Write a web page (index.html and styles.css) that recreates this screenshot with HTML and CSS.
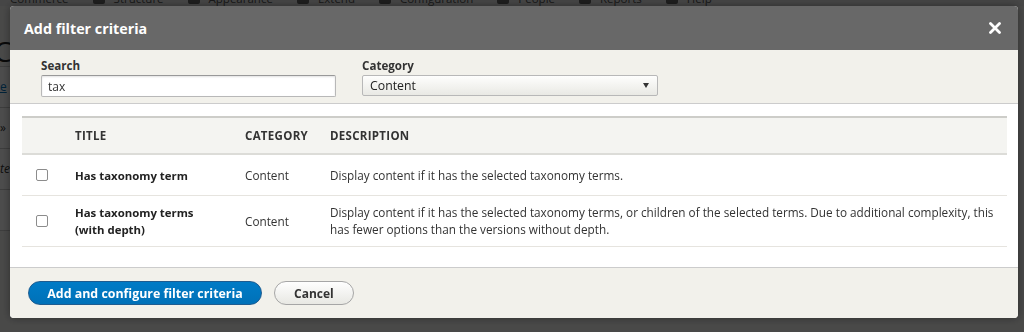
FILE: index.html
```html
<!DOCTYPE html>
<html lang="en">
<head>
    <meta charset="UTF-8">
    <meta name="viewport" content="width=device-width, initial-scale=1.0">
    <title>Add filter criteria</title>
    <link rel="stylesheet" href="styles.css">
</head>
<body>
    <nav class="toolbar">
        <a href="#" class="toolbar-first"><i class="toolbar-icon"></i>Commerce</a>
        <a href="#"><i class="toolbar-icon"></i>Structure</a>
        <a href="#"><i class="toolbar-icon"></i>Appearance</a>
        <a href="#"><i class="toolbar-icon"></i>Extend</a>
        <a href="#"><i class="toolbar-icon"></i>Configuration</a>
        <a href="#"><i class="toolbar-icon"></i>People</a>
        <a href="#"><i class="toolbar-icon"></i>Reports</a>
        <a href="#"><i class="toolbar-icon"></i>Help</a>
    </nav>

    <main class="page">
        <h1 class="page-title">C</h1>
        <div class="page-row"><a href="#">e</a></div>
        <div class="page-row">»</div>
        <div class="page-row page-row-italic">te</div>
        <div class="page-row"></div>
    </main>

    <div class="overlay"></div>

    <div class="dialog" role="dialog" aria-labelledby="dialogTitle">
        <div class="dialog-titlebar">
            <span id="dialogTitle" class="dialog-title">Add filter criteria</span>
            <button class="dialog-close" aria-label="Close">
                <svg width="12" height="12" viewBox="0 0 12 12">
                    <path d="M1.5 1.5 L10.5 10.5 M10.5 1.5 L1.5 10.5" stroke="#fff" stroke-width="2.8" stroke-linecap="round"/>
                </svg>
            </button>
        </div>

        <div class="filters">
            <div class="form-item">
                <label for="search">Search</label>
                <input id="search" class="form-text" type="text" value="tax">
            </div>
            <div class="form-item">
                <label for="category">Category</label>
                <div class="form-select" id="category">
                    <span>Content</span>
                    <span class="select-arrow"></span>
                </div>
            </div>
        </div>

        <div class="dialog-content">
            <table class="filter-table">
                <colgroup>
                    <col class="col-check">
                    <col class="col-title">
                    <col class="col-category">
                    <col>
                </colgroup>
                <thead>
                    <tr>
                        <th></th>
                        <th>Title</th>
                        <th>Category</th>
                        <th>Description</th>
                    </tr>
                </thead>
                <tbody>
                    <tr class="row-single">
                        <td><input type="checkbox" class="form-checkbox"></td>
                        <td class="item-title">Has taxonomy term</td>
                        <td>Content</td>
                        <td>Display content if it has the selected taxonomy terms.</td>
                    </tr>
                    <tr>
                        <td><input type="checkbox" class="form-checkbox"></td>
                        <td class="item-title">Has taxonomy terms<br>(with depth)</td>
                        <td>Content</td>
                        <td>Display content if it has the selected taxonomy terms, or children of the selected terms. Due to additional complexity, this has fewer options than the versions without depth.</td>
                    </tr>
                </tbody>
            </table>
        </div>

        <div class="button-pane">
            <button class="button button-primary">Add and configure filter criteria</button>
            <button class="button">Cancel</button>
        </div>
    </div>
</body>
</html>
```

FILE: styles.css
```css
body {
    font-family: "Open Sans", "DejaVu Sans", sans-serif;
    background-color: #f5f5f2;
    color: #333;
    margin: 0;
    overflow: hidden;
}
.toolbar {
    display: flex;
    gap: 24px;
    height: 14px;
    margin-top: -8px;
    padding-left: 10px;
    background-color: #ebebeb;
    font-size: 11.5px;
    line-height: 14px;
}
.toolbar a {
    display: flex;
    align-items: center;
    gap: 9px;
    color: #565656;
    text-decoration: none;
    white-space: nowrap;
}
.toolbar-icon {
    width: 12px;
    height: 10px;
    border-radius: 2px;
    background-color: #666;
}
.toolbar-first .toolbar-icon {
    display: none;
}
.page {
    width: 10px;
    overflow: hidden;
    padding-top: 26px;
}
.page-title {
    margin: 0 0 0 -6px;
    font-size: 28px;
    font-weight: normal;
    color: #222;
    height: 34px;
    border-bottom: 1px solid #ccc;
}
.page-row {
    height: 40px;
    line-height: 40px;
    font-size: 12px;
    border-bottom: 1px solid #ccc;
    background-color: #fff;
}
.page-row a {
    color: #0074bd;
}
.page-row-italic {
    font-style: italic;
}
.overlay {
    position: fixed;
    inset: 0;
    background-color: rgba(0, 0, 0, 0.7);
}
.dialog {
    position: fixed;
    top: 6px;
    left: 10px;
    width: 1008px;
    display: flex;
    flex-direction: column;
    background-color: #fff;
    border-radius: 4px;
    overflow: hidden;
    box-shadow: 0 0 8px rgba(0, 0, 0, 0.4);
}
.dialog-titlebar {
    display: flex;
    align-items: center;
    justify-content: space-between;
    height: 44px;
    padding: 0 16px 0 14px;
    background-color: #686868;
}
.dialog-title {
    color: #fff;
    font-size: 14.3px;
    font-weight: bold;
}
.dialog-close {
    border: 0;
    background: none;
    padding: 0;
    width: 14px;
    height: 14px;
    display: flex;
    align-items: center;
    justify-content: center;
}
.filters {
    display: flex;
    gap: 26px;
    height: 53px;
    padding-left: 31px;
    background-color: #f2f1eb;
    border-bottom: 1px solid #ccc;
}
.form-item {
    display: flex;
    flex-direction: column;
    padding-top: 8px;
}
.form-item label {
    font-size: 11.6px;
    font-weight: bold;
    color: #333;
    line-height: 16px;
    margin-bottom: 1px;
}
.form-text {
    box-sizing: border-box;
    width: 295px;
    height: 22px;
    margin: 0;
    padding: 0 6px;
    border: 1px solid #b8b8b8;
    border-top-color: #999;
    border-radius: 2px;
    box-shadow: inset 0 1px 2px rgba(0, 0, 0, 0.12);
    font-family: inherit;
    font-size: 12px;
    color: #333;
}
.form-select {
    box-sizing: border-box;
    width: 296px;
    height: 21px;
    display: flex;
    align-items: center;
    justify-content: space-between;
    padding: 0 8px 0 7px;
    border: 1px solid #b8b8b8;
    border-radius: 2px;
    background: linear-gradient(#fefefd, #e9e9e4);
    font-size: 12.3px;
    color: #222;
}
.select-arrow {
    width: 0;
    height: 0;
    border-left: 3.5px solid transparent;
    border-right: 3.5px solid transparent;
    border-top: 5px solid #333;
}
.dialog-content {
    height: 151px;
    padding: 12px 11px 0 12px;
    border-bottom: 1px solid #ccc;
}
.filter-table {
    width: 100%;
    border-collapse: collapse;
    table-layout: fixed;
    font-size: 11.75px;
    line-height: 17px;
    border-bottom: 1px solid #e6e4df;
}
.col-check {
    width: 41px;
}
.col-title {
    width: 170px;
}
.col-category {
    width: 85px;
}
.filter-table th {
    height: 35px;
    padding: 0 12px;
    text-align: left;
    text-transform: uppercase;
    font-size: 11.5px;
    letter-spacing: 0.3px;
    font-weight: bold;
    color: #333;
    background-color: #f4f4f1;
    border-top: 2px solid #cdcdc9;
    border-bottom: 2px solid #dcdcd8;
}
.filter-table td {
    padding: 8px 12px;
    border-bottom: 1px solid #e6e4df;
    vertical-align: middle;
}
.filter-table td:first-child {
    padding-left: 14px;
}
.row-single td {
    height: 24px;
}
.item-title {
    font-weight: bold;
    font-size: 11.4px;
    color: #222;
}
.form-checkbox {
    appearance: none;
    display: block;
    width: 12px;
    height: 12px;
    margin: 0;
    border: 1px solid #8c8c8c;
    border-radius: 2px;
    background-color: #fff;
}
.button-pane {
    display: flex;
    gap: 12px;
    padding: 13px 18px;
    background-color: #f2f1eb;
}
.button {
    height: 24px;
    padding: 0 19px;
    border: 1px solid #a6a6a6;
    border-radius: 20px;
    background: linear-gradient(#fefefe, #e8e8e3);
    font-family: inherit;
    font-size: 12px;
    font-weight: bold;
    color: #333;
    white-space: nowrap;
}
.button-primary {
    min-width: 234px;
    padding: 0 17px;
    border-color: #1e5c90;
    background: linear-gradient(#007bc6, #0071b8);
    font-size: 12.4px;
    color: #fff;
}
```
